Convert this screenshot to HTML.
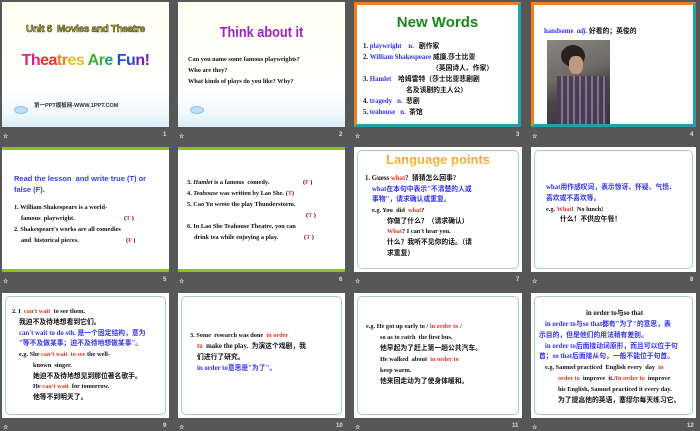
<!DOCTYPE html>
<html><head><meta charset="utf-8"><style>
*{margin:0;padding:0;box-sizing:border-box}
body{width:700px;height:431px;background:#575757;position:relative;overflow:hidden;font-family:"Liberation Serif","Noto Serif CJK SC",serif}
.t{position:absolute;width:167px;height:125px;background:#fff;overflow:hidden}
.l{position:absolute;white-space:nowrap;font-size:6.3px;font-weight:bold;color:#111;line-height:8px}
.cj{font-family:"Liberation Serif","Noto Sans CJK SC",sans-serif;font-size:6.8px}
.b{color:#3333ee}.r{color:#ee3322}
.f{position:absolute;font:bold 6px "Liberation Sans",sans-serif;color:#ddd}
.g{position:absolute;left:3px;top:3px;right:3px;bottom:3px;border:1.5px solid #a8d0b8;border-radius:5px}
.gb{position:absolute;left:0;right:0;height:3px;background:#8cc21a}
</style></head><body>

<!-- 1 -->
<div class="t" style="left:2px;top:2px;background:linear-gradient(#fffff2,#fff 70%,#e8f4fb)">
<div class="l" style="left:0;width:167px;text-align:center;top:22px;font:bold 10px 'Liberation Sans',sans-serif;color:#c8c400;-webkit-text-stroke:0.6px #444;letter-spacing:-0.3px;line-height:12px">Unit 6&nbsp; Movies and Theatre</div>
<div class="l" style="left:0;width:167px;text-align:center;top:50px;font:bold 16px 'Liberation Sans',sans-serif;line-height:18px;letter-spacing:-0.5px"><span style="color:#e0208a">Th</span><span style="color:#f03030">ea</span><span style="color:#f08020">tr</span><span style="color:#e8c020">es </span><span style="color:#40b030">Ar</span><span style="color:#20a080">e </span><span style="color:#2050d0">Fu</span><span style="color:#7020c0">n!</span></div>
<div class="l" style="left:32px;top:99px;font:bold 5.5px 'Liberation Sans','Noto Sans CJK SC',sans-serif;color:#333">第一PPT模板网-WWW.1PPT.COM</div>
<div style="position:absolute;left:0;right:0;bottom:0;height:16px;background:linear-gradient(#f4fafd,#dbeef8)"></div>
<div style="position:absolute;left:12px;top:104px;width:14px;height:8px;border-radius:50%;background:#bfe0f4;border:1px solid #8cc4e4"></div>
</div>
<div class="f" style="left:3px;top:133px">☆</div><div class="f" style="left:163px;top:132px">1</div>

<!-- 2 -->
<div class="t" style="left:178px;top:2px;background:linear-gradient(#fffff2,#fff 70%,#e8f4fb)">
<div class="l" style="left:0;width:167px;text-align:center;top:22px;font:bold 15px 'Liberation Sans',sans-serif;color:#a020c8;line-height:18px;transform:scaleX(.85)">Think about it</div>
<div class="l" style="left:10px;top:54px">Can you name some famous playwrights?</div>
<div class="l" style="left:10px;top:65px">Who are they?</div>
<div class="l" style="left:10px;top:76px">What kinds of plays do you like? Why?</div>
<div style="position:absolute;left:0;right:0;bottom:0;height:16px;background:linear-gradient(#f4fafd,#dbeef8)"></div>
<div style="position:absolute;left:12px;top:104px;width:14px;height:8px;border-radius:50%;background:#bfe0f4;border:1px solid #8cc4e4"></div>
</div>
<div class="f" style="left:179px;top:133px">☆</div><div class="f" style="left:339px;top:132px">2</div>

<!-- 3 -->
<div class="t" style="left:354px;top:2px;border-left:3px solid #f08020;border-top:3px solid #f08020;border-right:3px solid #20a0b0;border-bottom:3px solid #20a0b0">
<div class="l" style="left:0;width:161px;text-align:center;top:9px;font:bold 15px 'Liberation Sans',sans-serif;color:#178a17;line-height:18px">New Words</div>
<div class="l cj" style="left:6px;top:38px">1. <span class="b">playwright&nbsp;&nbsp;&nbsp; n.</span>&nbsp;&nbsp; 剧作家</div>
<div class="l cj" style="left:6px;top:49px">2. <span class="b">William Shakespeare</span> 威廉.莎士比亚</div>
<div class="l cj" style="left:75px;top:60px">（英国诗人、作家）</div>
<div class="l cj" style="left:6px;top:71px">3. <span class="b">Hamlet</span>&nbsp;&nbsp;&nbsp; 哈姆雷特（莎士比亚悲剧剧</div>
<div class="l cj" style="left:49px;top:82px">名及该剧的主人公）</div>
<div class="l cj" style="left:6px;top:93px">4. <span class="b">tragedy&nbsp;&nbsp; n.</span>&nbsp; 悲剧</div>
<div class="l cj" style="left:6px;top:104px">5. <span class="b">teahouse&nbsp;&nbsp; n.</span>&nbsp; 茶馆</div>
</div>
<div class="f" style="left:355px;top:133px">☆</div><div class="f" style="left:516px;top:132px">3</div>

<!-- 4 -->
<div class="t" style="left:531px;top:2px;width:165px;border-left:3px solid #f08020;border-top:3px solid #f08020;border-right:3px solid #20a0b0;border-bottom:3px solid #20a0b0">
<div class="l cj" style="left:10px;top:23px"><span class="b">handsome&nbsp; <i>adj.</i></span> 好看的；英俊的</div>
<div style="position:absolute;left:13px;top:35px;width:63px;height:84px;background:linear-gradient(160deg,#8a8680 0%,#6e6a66 40%,#4a4644 60%,#3a3040 100%)">
<div style="position:absolute;left:14px;top:5px;width:24px;height:22px;border-radius:50%;background:#2a2020"></div>
<div style="position:absolute;left:22px;top:16px;width:14px;height:18px;border-radius:40%;background:#c09880"></div>
<div style="position:absolute;left:10px;top:36px;width:50px;height:48px;background:repeating-linear-gradient(90deg,#4a3a5a 0 4px,#8a7a8a 4px 6px),#4a3a5a;opacity:.9"></div>
</div>
</div>
<div class="f" style="left:532px;top:133px">☆</div><div class="f" style="left:690px;top:132px">4</div>

<!-- 5 -->
<div class="t" style="left:2px;top:147px">
<div class="gb" style="top:0"></div><div class="gb" style="bottom:0"></div>
<div class="l" style="left:12px;top:27px;font:bold 7.5px 'Liberation Sans',sans-serif;color:#3a3af0;line-height:10px">Read the lesson&nbsp; and write true (T) or</div>
<div class="l" style="left:12px;top:38px;font:bold 7.5px 'Liberation Sans',sans-serif;color:#3a3af0;line-height:10px">false (F).</div>
<div class="l" style="left:12px;top:57px">1. William Shakespeare is a world-</div>
<div class="l" style="left:19px;top:68px">famous&nbsp; playwright.</div><div class="l" style="left:122px;top:68px">(<span class="r">T</span> )</div>
<div class="l" style="left:12px;top:79px">2. Shakespeare's works are all comedies</div>
<div class="l" style="left:19px;top:90px">and&nbsp; historical pieces.</div><div class="l" style="left:124px;top:90px">(<span class="r">F</span> )</div>
</div>
<div class="f" style="left:3px;top:278px">☆</div><div class="f" style="left:163px;top:277px">5</div>

<!-- 6 -->
<div class="t" style="left:178px;top:147px">
<div class="gb" style="top:0"></div><div class="gb" style="bottom:0"></div>
<div class="l" style="left:9px;top:32px">3. <i>Hamlet</i> is a famous&nbsp; comedy.</div><div class="l" style="left:125px;top:32px">(<span class="r">F</span> )</div>
<div class="l" style="left:9px;top:43px">4. <i>Teahouse</i> was written by Lao She. (<span class="r">T</span>)</div>
<div class="l" style="left:9px;top:54px">5. Cao Yu wrote the play Thunderstorm.</div>
<div class="l" style="left:128px;top:65px">(<span class="r">T</span> )</div>
<div class="l" style="left:9px;top:76px">6. In Lao She Teahouse Theatre, you can</div>
<div class="l" style="left:16px;top:87px">drink tea while enjoying a play.</div><div class="l" style="left:126px;top:87px">(<span class="r">T</span> )</div>
</div>
<div class="f" style="left:179px;top:278px">☆</div><div class="f" style="left:339px;top:277px">6</div>

<!-- 7 -->
<div class="t" style="left:354px;top:147px;width:168px">
<div class="g"></div>
<div class="l" style="left:0;width:168px;text-align:center;top:5px;font:bold 13px 'Liberation Sans',sans-serif;line-height:16px;color:#f4a030;background:linear-gradient(#f48030,#f8d040);-webkit-background-clip:text;-webkit-text-fill-color:transparent">Language points</div>
<div class="l cj" style="left:11px;top:28px">1. Guess <span class="r">what</span>?&nbsp; 猜猜怎么回事?</div>
<div class="l cj b" style="left:18px;top:39px">what在本句中表示"不清楚的人或</div>
<div class="l cj b" style="left:18px;top:49px">事物"，请求确认或重复。</div>
<div class="l" style="left:18px;top:60px">e.g. You&nbsp; did&nbsp; <span class="r">what</span>?</div>
<div class="l cj" style="left:33px;top:71px">你做了什么？（请求确认）</div>
<div class="l" style="left:33px;top:81px"><span class="r">What</span>? I can't hear you.</div>
<div class="l cj" style="left:33px;top:92px">什么？我听不见你的话。（请</div>
<div class="l cj" style="left:33px;top:103px">求重复）</div>
</div>
<div class="f" style="left:355px;top:278px">☆</div><div class="f" style="left:516px;top:277px">7</div>

<!-- 8 -->
<div class="t" style="left:531px;top:147px;width:165px">
<div class="g"></div>
<div class="l cj b" style="left:15px;top:37px">what用作感叹词，表示惊讶、怀疑、气愤、</div>
<div class="l cj b" style="left:15px;top:48px">喜欢或不喜欢等。</div>
<div class="l" style="left:15px;top:59px">e.g. <span class="r">What</span>!&nbsp; No lunch!</div>
<div class="l cj" style="left:29px;top:69px">什么！不供应午餐！</div>
</div>
<div class="f" style="left:532px;top:278px">☆</div><div class="f" style="left:690px;top:277px">8</div>

<!-- 9 -->
<div class="t" style="left:2px;top:293px">
<div class="g"></div>
<div class="l" style="left:10px;top:15px">2. I&nbsp; <span class="r">can't wait</span>&nbsp; to see them.</div>
<div class="l cj" style="left:17px;top:26px">我迫不及待地想看到它们。</div>
<div class="l cj b" style="left:17px;top:37px">can't wait to do sth. 是一个固定结构，意为</div>
<div class="l cj b" style="left:17px;top:47px">"等不及做某事；迫不及待地想做某事"。</div>
<div class="l" style="left:17px;top:58px">e.g. She <span class="r">can't wait&nbsp; to see</span> the well-</div>
<div class="l" style="left:31px;top:69px">known&nbsp; singer.</div>
<div class="l cj" style="left:31px;top:80px">她迫不及待地想见到那位著名歌手。</div>
<div class="l" style="left:31px;top:90px">He <span class="r">can't wait</span>&nbsp; for tomorrow.</div>
<div class="l cj" style="left:31px;top:101px">他等不到明天了。</div>
</div>
<div class="f" style="left:3px;top:424px">☆</div><div class="f" style="left:163px;top:423px">9</div>

<!-- 10 -->
<div class="t" style="left:178px;top:293px">
<div class="g"></div>
<div class="l" style="left:12px;top:39px">3. Some&nbsp; research was done&nbsp; <span class="r">in order</span></div>
<div class="l cj" style="left:19px;top:50px"><span class="r">to</span>&nbsp; make the play.&nbsp; 为演这个戏剧，我</div>
<div class="l cj" style="left:19px;top:61px">们进行了研究。</div>
<div class="l cj b" style="left:19px;top:72px">in order to意思是"为了"。</div>
</div>
<div class="f" style="left:179px;top:424px">☆</div><div class="f" style="left:336px;top:423px">10</div>

<!-- 11 -->
<div class="t" style="left:354px;top:293px;width:168px">
<div class="g"></div>
<div class="l" style="left:12px;top:30px">e.g. He got up early to / <span class="r">in order to</span> /</div>
<div class="l" style="left:26px;top:41px">so as to catch&nbsp; the first bus.</div>
<div class="l cj" style="left:26px;top:52px">他早起为了赶上第一趟公共汽车。</div>
<div class="l" style="left:26px;top:63px">He walked&nbsp; about&nbsp; <span class="r">in order to</span></div>
<div class="l" style="left:26px;top:74px">keep warm.</div>
<div class="l cj" style="left:26px;top:85px">他来回走动为了使身体暖和。</div>
</div>
<div class="f" style="left:355px;top:424px">☆</div><div class="f" style="left:512px;top:423px">11</div>

<!-- 12 -->
<div class="t" style="left:531px;top:293px;width:165px">
<div class="g"></div>
<div class="l cj" style="left:55px;top:17px">in order to与so that</div>
<div class="l cj b" style="left:14px;top:28px">in order to与so that都有"为了"的意思，表</div>
<div class="l cj b" style="left:8px;top:39px">示目的，但是他们的用法稍有差别。</div>
<div class="l cj b" style="left:14px;top:50px">in order to后面接动词原形，而且可以位于句</div>
<div class="l cj b" style="left:8px;top:60px">首；so that后面接从句，一般不能位于句首。</div>
<div class="l" style="left:14px;top:71px">e.g. Samuel practiced&nbsp; English every&nbsp; day&nbsp; <span class="r">in</span></div>
<div class="l" style="left:27px;top:82px"><span class="r">order to</span>&nbsp; improve&nbsp; it./<span class="r">In order to</span>&nbsp; improve</div>
<div class="l" style="left:27px;top:93px">his English, Samuel practiced it every day.</div>
<div class="l cj" style="left:27px;top:104px">为了提高他的英语，塞缪尔每天练习它。</div>
</div>
<div class="f" style="left:532px;top:424px">☆</div><div class="f" style="left:687px;top:423px">12</div>

</body></html>
